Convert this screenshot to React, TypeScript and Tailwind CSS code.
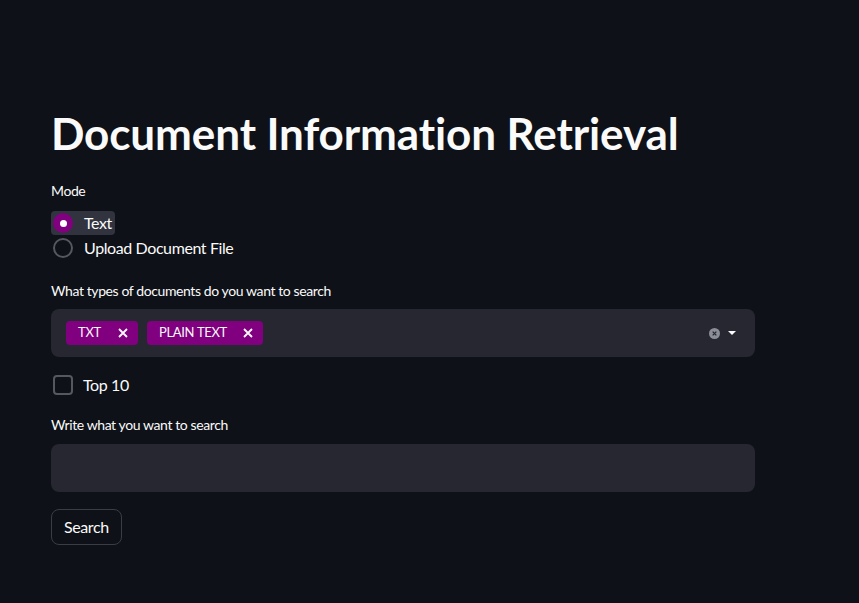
import React from "react";

export default function App() {
  return (
    <div
      className="w-[859px] h-[603px] bg-[#0e1117] text-[#fafafa] overflow-hidden tracking-[-0.4px]"
      style={{ fontFamily: '"Source Sans Pro", Lato, "Noto Sans", sans-serif' }}
    >
      <div className="pl-[51px] w-[755px] pt-[103px]">
        <h1 className="text-[44px] font-bold leading-[60px] tracking-[-0.1px]">Document Information Retrieval</h1>

        <div className="mt-[18px] text-[14px] leading-[20px]">Mode</div>
        <div className="mt-[10px] flex flex-col">
          <div className="flex">
            <div className="flex items-center gap-[11px] h-[24px] pl-[2px] pr-[3px] rounded bg-[#31333f]">
              <span className="w-[20px] h-[20px] rounded-full bg-[#800080] flex items-center justify-center">
                <span className="w-[7px] h-[7px] rounded-full bg-white" />
              </span>
              <span className="text-[16px]">Text</span>
            </div>
          </div>
          <div className="flex items-center gap-[11px] h-[26px] pl-[2px]">
            <span className="w-[20px] h-[20px] rounded-full border-2 border-[#555761]" />
            <span className="text-[16px]">Upload Document File</span>
          </div>
        </div>

        <div className="mt-[20px] text-[14px] leading-[20px]">What types of documents do you want to search</div>
        <div className="mt-[8px] h-[48px] rounded-lg bg-[#262730] flex items-center pl-[15px] pr-[18px]">
          <div className="flex gap-[9px] flex-1">
            <span className="h-[24px] rounded bg-[#800080] flex items-center pl-[12px] pr-[10px] text-[13px] tracking-[-0.3px] gap-[17px]">
              TXT
              <svg width="10" height="10" viewBox="0 0 10 10"><path d="M1 1L9 9M9 1L1 9" stroke="#fafafa" strokeWidth="1.8" /></svg>
            </span>
            <span className="h-[24px] rounded bg-[#800080] flex items-center pl-[12px] pr-[10px] text-[13px] tracking-[-0.3px] gap-[16px]">
              PLAIN TEXT
              <svg width="10" height="10" viewBox="0 0 10 10"><path d="M1 1L9 9M9 1L1 9" stroke="#fafafa" strokeWidth="1.8" /></svg>
            </span>
          </div>
          <div className="flex items-center gap-[7px]">
            <svg width="11" height="11" viewBox="0 0 12 12">
              <circle cx="6" cy="6" r="6" fill="#8b8d97" />
              <path d="M4 4L8 8M8 4L4 8" stroke="#262730" strokeWidth="1.4" />
            </svg>
            <svg width="10" height="6" viewBox="0 0 10 6"><path d="M1 1H9L5 5Z" fill="#fafafa" /></svg>
          </div>
        </div>

        <div className="mt-[18px] flex items-center gap-[10px] h-[20px] pl-[2px]">
          <span className="w-[20px] h-[20px] rounded border-2 border-[#555761]" />
          <span className="text-[16px]">Top 10</span>
        </div>

        <div className="mt-[20px] text-[14px] leading-[20px]">Write what you want to search</div>
        <div className="mt-[9px] h-[48px] rounded-lg bg-[#262730]" />

        <button className="mt-[17px] h-[36px] px-[12px] rounded-lg border border-[#3b3d45] bg-[#0e1117] text-[16px] text-[#fafafa]">
          Search
        </button>
      </div>
    </div>
  );
}
